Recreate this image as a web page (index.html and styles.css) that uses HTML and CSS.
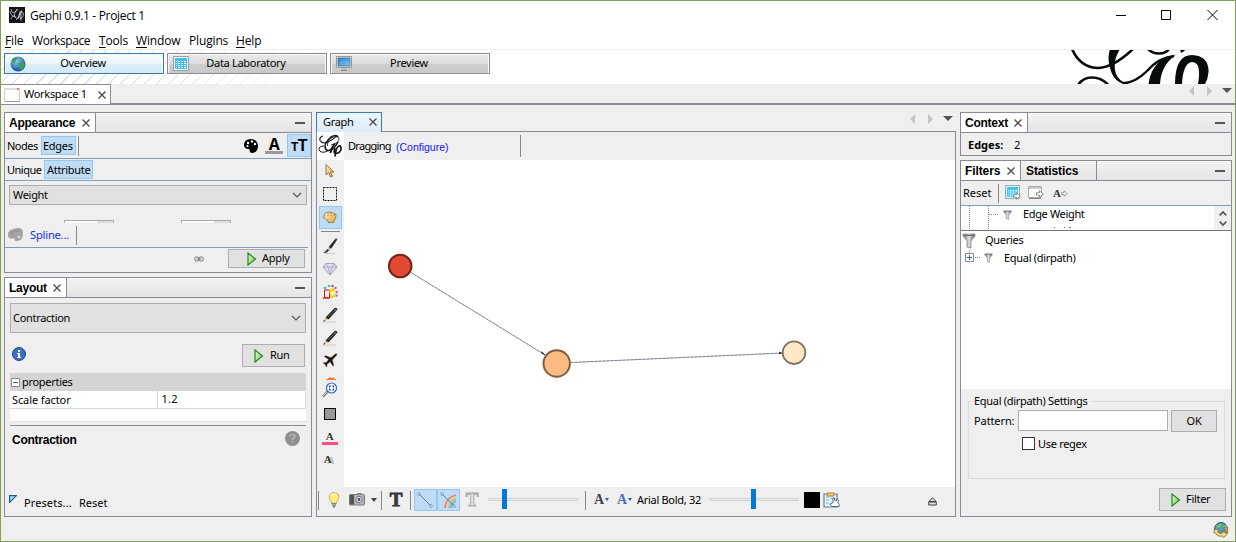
FILE: index.html
```
<!DOCTYPE html>
<html lang="en">
<head>
<meta charset="utf-8">
<title>Gephi 0.9.1 - Project 1</title>
<link rel="stylesheet" href="styles.css">
</head>
<body>
<svg class="defs" aria-hidden="true">
  <defs>
    <linearGradient id="gBtn" x1="0" y1="0" x2="1" y2="1"><stop offset="0" stop-color="#f0fbe8"/><stop offset="1" stop-color="#6cc53c"/></linearGradient>
    <linearGradient id="gGray" x1="0" y1="0" x2="1" y2="0"><stop offset="0" stop-color="#777"/><stop offset=".5" stop-color="#ddd"/><stop offset="1" stop-color="#666"/></linearGradient>
    <radialGradient id="gGlobe" cx=".4" cy=".3" r=".7"><stop offset="0" stop-color="#8fcbf2"/><stop offset="1" stop-color="#14509c"/></radialGradient>
    <linearGradient id="gGold" x1="0" y1="0" x2="1" y2="1"><stop offset="0" stop-color="#fff3c4"/><stop offset="1" stop-color="#d9a440"/></linearGradient>
    <linearGradient id="gScreen" x1="0" y1="0" x2="1" y2="1"><stop offset="0" stop-color="#2b86d4"/><stop offset="1" stop-color="#7cc8fa"/></linearGradient>
    <symbol id="close" viewBox="0 0 8 8"><path d="M.5.5l7 7M7.5.5l-7 7" stroke="#4a4a4a" stroke-width="1.300" fill="none"/></symbol>
    <symbol id="play" viewBox="0 0 10 14"><path d="M1 1v12l7.5-6z" fill="url(#gBtn)" stroke="#22891c" stroke-width="1.2"/></symbol>
    <symbol id="chev" viewBox="0 0 10 6"><path d="M1 1l4 4 4-4" fill="none" stroke="#555" stroke-width="1.2"/></symbol>
    <symbol id="funnel" viewBox="0 0 14 16"><path d="M1 1h12v2L9 8v7l-4-1V8L1 3z" fill="url(#gGray)" stroke="#888" stroke-width=".8"/><path d="M2 2.500h10" stroke="#666" stroke-width="1"/></symbol>
    <symbol id="pencil" viewBox="0 0 16 16"><path d="M2 15.500q6-1 12-.4" stroke="#ccc" fill="none"/><path d="M1.500 14.500l2-4.500 2.500 2.500z" fill="#dfc483"/><path d="M3.500 10.500l9-9.500q2.500-1 3 1.500L6.500 12.500z" fill="#292929"/><path d="M1 15l1.200-2.300 1 1z" fill="#222"/><path d="M6 10l7-7" stroke="#666" stroke-width=".8"/><path d="M12.500 2l1.500 1.500" stroke="#aaa"/></symbol>
    <symbol id="table" viewBox="0 0 16 16"><path d="M.5.5h15v14H.5z" fill="#fff" stroke="#8ba3a8"/><path d="M2 2h12v11H2z" fill="#3fc0ec"/><path d="M5 5h2v1H5zM8 5h2v1H8zM11 5h2v1h-2zM5 7h2v1H5zM8 7h2v1H8zM11 7h2v1h-2zM5 9h2v1H5zM8 9h2v1H8zM11 9h2v1h-2zM5 11h2v1H5zM8 11h2v1H8zM11 11h2v1h-2z" fill="#fff"/><path d="M3 5h1v1H3zM3 7h1v1H3zM3 9h1v1H3zM3 11h1v1H3z" fill="#c8eefb"/></symbol>
    <symbol id="arrow" viewBox="0 0 8 8"><path d="M.5 2.800h3V.8L7.300 4 3.500 7.200v-2h-3z" fill="#fff" stroke="#777" stroke-width=".8"/></symbol>
    <symbol id="navs" viewBox="0 0 46 12"><path d="M7 1v10L2 6zM20 1v10l5-5z" fill="#c4c4c4"/><path d="M35 3h10l-5 5z" fill="#555"/></symbol>
  </defs>
</svg>

<header class="titlebar">
  <svg class="appicon" width="16" height="16" viewBox="0 0 16 16"><path fill="#141418" d="M0 0h16v16H0z"/><path d="M2 2q1 5 4 3t3-3M8 2q-5 7-1 9t4-7M2 12q1-4 5-2M9 12q1-8 4-7t0 6q-2 2-2-1M12 4v10M1 4q1 6 5 5M7 13q4-2 6-10" fill="none" stroke="#ddd" stroke-width=".7"/></svg>
  <span class="title">Gephi 0.9.1 - Project 1</span>
  <svg class="winctl" width="104" height="12" viewBox="0 0 104 12"><path d="M0 6.500h10M45.500 1.500h9v9h-9zM91.500 1l10 10M101.500 1l-10 10" fill="none" stroke="#000"/></svg>
</header>

<nav class="menubar">
  <span class="m1"><u>F</u>ile</span><span class="m2">Workspace</span><span class="m3"><u>T</u>ools</span><span class="m4"><u>W</u>indow</span><span class="m5">Plugins</span><span class="m6"><u>H</u>elp</span>
</nav>

<div class="banner">
  <button class="mode active"><svg width="16" height="16" viewBox="0 0 16 16"><circle cx="8" cy="8" r="7.500" fill="url(#gGlobe)"/><path d="M2 3q4-3 6-1l-2 2-1 3-3-1zM8 7l5-1 2 3-3 5-3-1 0-3z" fill="#3ca05a"/></svg><span>Overview</span></button>
  <button class="mode"><svg width="16" height="16"><use href="#table"/></svg><span>Data Laboratory</span></button>
  <button class="mode"><svg width="16" height="16" viewBox="0 0 16 16"><path d="M.5.5h15v11H.5z" fill="#e4e4e4" stroke="#999"/><path d="M2 2h12v8H2z" fill="url(#gScreen)" stroke="#357"  stroke-width=".6"/><path d="M6 12h4v2H6z" fill="#bbb"/><path d="M5 14.500h6" stroke="#888"/></svg><span>Preview</span></button>
  <svg class="brand" width="140" height="34" viewBox="0 0 140 34"><g fill="none" stroke="#080b0b"><path d="M2-1Q10 17 27 18Q43 18 63-1" stroke-width="2.600"/><path d="M8.500 34.500Q13 27.500 22 27.500T38 34.500" stroke-width="2.600"/><path d="M78-1q4 4.500 11 4.500T99-1" stroke-width="2.600"/><path d="M52 33.500Q65 33 77 21 88 8 104 6" stroke-width="2.400"/></g><g fill="#080b0b"><path d="M40-1h10Q42 12 46 24q3 7 10 8.500V34Q44 33 40 18 37 8 40-1z"/><path d="M78.500 34Q80 20 90 11L106 5Q91 15 90 34z"/><path d="M105 34Q105 5 122 5q17 1 16.500 17-.5 7-3.500 12h-7Q132 12 122 12q-9 1-10 22zM110-1h6q-1 2-5 4z"/></g></svg>
</div>

<div class="wstabs">
  <div class="wstab"><svg width="16" height="14" viewBox="0 0 16 14"><path d="M.5.5h15v13H.5z" fill="#fff" stroke="#ccc"/><path d="M.5 13.500h15" stroke="#999"/><path d="M0 0h16v2H0z" fill="#ddd"/><path d="M13 0h2v2h-2z" fill="#e78"/></svg><span>Workspace 1</span><svg class="x" width="8" height="8"><use href="#close"/></svg></div>
  <svg class="navs" width="46" height="12"><use href="#navs"/></svg>
</div>

<main class="work">
  <div class="col left">
    <section class="panel appearance">
      <div class="phead"><div class="ptab"><span class="b ap">Appearance</span><svg width="8" height="8"><use href="#close"/></svg></div><i class="min"></i></div>
      <div class="tb tb1"><span class="nodes">Nodes</span><span class="on edges">Edges</span><i class="vsep"></i>
        <svg class="palette" width="16" height="16" viewBox="0 0 16 16"><path d="M8 1C3 1 1 4 1 7c0 4 4 4 5 4s0 4 3 4c4 0 6-3 6-7S12 1 8 1z" fill="#000"/><g fill="#fff"><circle cx="5" cy="5" r="1.200"/><circle cx="9" cy="3.500" r="1.200"/><circle cx="12" cy="6" r="1.200"/><circle cx="4.500" cy="8" r="1"/></g></svg>
        <span class="acolor">A</span><span class="on size"><small>T</small>T</span></div>
      <div class="tb tb2"><span class="unique">Unique</span><span class="on attr">Attribute</span></div>
      <div class="select weight"><span>Weight</span><svg width="10" height="6"><use href="#chev"/></svg></div>
      <div class="spins"><i></i><i></i></div>
      <div class="spline"><svg width="16" height="14" viewBox="0 0 16 14"><path d="M5 1q10-3 10 4 0 8-6 8-4 0-2-3-6 2-7-2-1-5 5-7z" fill="#a3a3a3"/><circle cx="11" cy="9" r="1.300" fill="#ddd"/><path d="M3 5q4-3 9-2" stroke="#888" fill="none"/></svg><span>Spline...</span><i class="vsep"></i></div>
      <div class="applyrow"><svg width="10" height="6" viewBox="0 0 10 6"><g fill="none" stroke="#777"><rect x=".7" y="1" width="4.300" height="4" rx="1.500"/><rect x="5" y="1" width="4.300" height="4" rx="1.500"/><path d="M2.500 3h5"/></g></svg><button class="btn apply"><svg width="10" height="14"><use href="#play"/></svg><span>Apply</span></button></div>
    </section>

    <section class="panel layout">
      <div class="phead"><div class="ptab"><span class="b ly">Layout</span><svg width="8" height="8"><use href="#close"/></svg></div><i class="min"></i></div>
      <div class="select contraction"><span>Contraction</span><svg width="10" height="6"><use href="#chev"/></svg></div>
      <div class="runrow"><svg width="14" height="14" viewBox="0 0 14 14"><circle cx="7" cy="7" r="6.500" fill="#3d6fc6" stroke="#22438c"/><path d="M6 3h2v2H6zM5 6h3v4h1v1H5v-1h1V7H5z" fill="#fff"/></svg><button class="btn run"><svg width="10" height="14"><use href="#play"/></svg><span>Run</span></button></div>
      <div class="props">
        <div class="prophead"><svg width="9" height="9" viewBox="0 0 9 9"><path d="M.5.5h8v8h-8z" fill="#fff" stroke="#888"/><path d="M2 4.500h5" stroke="#36a"/></svg><span>properties</span></div>
        <div class="proprow"><span>Scale factor</span><span>1.2</span></div>
        <div class="propblank"></div>
      </div>
      <div class="desc"><span class="b">Contraction</span><svg width="15" height="15" viewBox="0 0 15 15"><circle cx="7.500" cy="7.500" r="7.500" fill="#8f8f8f"/><path d="M5 5.500q0-2 2.500-2t2.500 2q0 1-1.300 1.800T7.500 9" fill="none" stroke="#b5b5b5" stroke-width="1.600"/><path d="M6.700 10.200h1.600v1.600H6.700z" fill="#b5b5b5"/></svg></div>
      <div class="presets"><svg width="8" height="8" viewBox="0 0 8 8"><path d="M.6.6h6.800L.6 7.400z" fill="#a9dcf8" stroke="#1b5f97" stroke-width="1.200"/></svg><span class="pr">Presets...</span><span>Reset</span></div>
    </section>
  </div>

  <section class="center">
    <div class="gtabs"><div class="gtab"><span>Graph</span><svg width="8" height="8"><use href="#close"/></svg></div><svg class="navs" width="46" height="12"><use href="#navs"/></svg></div>
    <div class="gbody">
      <div class="gtop"><div class="glogo"><svg width="25" height="24" viewBox="0 0 25 24"><g fill="none" stroke="#151515"><path d="M5 2Q1 3 2 6.500 4 10 9 8.500 15 6 19 1.500" stroke-width="1.100"/><path d="M20 3Q18 0 13 3 7 8 7 13q1 5 6 3 4-2 7-8" stroke-width="1.500"/><path d="M9.500 12Q9 5 16 3q5-1 5 2 0 4-8 6" stroke-width=".8"/><path d="M6 12Q1 12 1 15.500 2 19 7 18q6-1 10-8" stroke-width="1"/><path d="M17 9.500Q13 14 12.500 19" stroke-width="1.800"/><path d="M17 14q-2 5 .5 5.500 4 0 5.500-4 .5-4-2-3.500-3 1-4 10.500" stroke-width="1.700"/></g></svg></div><span class="drag">Dragging</span><span class="conf">(Configure)</span><i class="vsep"></i></div>
      <div class="gmid">
        <div class="tools">
          <div class="tool"><svg width="12" height="16" viewBox="0 0 12 16"><path d="M2 1.500v10.500l2.600-2.500 2 4.500 1.900-.8-2-4.200h3.500z" fill="url(#gGold)" stroke="#9a7544"/></svg></div>
          <div class="tool"><svg width="16" height="16" viewBox="0 0 16 16"><path d="M1.500 1.500h13v13h-13z" fill="none" stroke="#111" stroke-dasharray="2 1"/></svg></div>
          <div class="tool sel"><svg width="16" height="16" viewBox="0 0 16 16"><path d="M3 4.500q2-2 3-.5Q7 2 9 3.800q2-1 2.500.7Q14 4 14 6.500q0 3.500-2 5v2H6v-2Q4 11 3 9.500 0 8.500 2 7z" fill="url(#gGold)" stroke="#a07f48"/><path d="M6 4.500v2.500M9 4.500v2.500M12 4.500v2.500" stroke="#b78a45" stroke-width=".8"/></svg></div>
          <i class="hsep"></i>
          <div class="tool brush"><svg width="16" height="16" viewBox="0 0 16 16"><path d="M3 15.500h10" stroke="#ccc"/><path d="M14 .5l1 1-6 9-2-1.500z" fill="#222" stroke="#222" stroke-width=".5"/><path d="M6.500 9l2.500 2-1.500 2-2-2z" fill="#bbb"/><path d="M5.500 11l1.500 1.500Q5 15.500 1 15q2-1 4.500-4z" fill="#3d382c"/></svg></div>
          <div class="tool"><svg width="16" height="16" viewBox="0 0 16 16"><path d="M4 2.500h8l3 3.500-7 8-7-8z" fill="#e0e0f0" stroke="#a3a3b8"/><path d="M1 6h14M4 2.500L6 6l2 8 2-8 2-3.500" stroke="#9c9cb2" fill="none" stroke-width=".7"/></svg></div>
          <div class="tool"><svg width="16" height="16" viewBox="0 0 16 16"><g><circle cx="3" cy="4" r="1.300" fill="#58a6e8"/><circle cx="7" cy="2" r="1.300" fill="#65ba54"/><circle cx="10.500" cy="2" r="1.200" fill="#666"/><circle cx="13.500" cy="4" r="1.200" fill="#e34bc5"/><circle cx="15" cy="8" r="1.200" fill="#bf62e7"/><circle cx="14.500" cy="11.500" r="1.200" fill="#9a62e7"/></g><path d="M2.500 6h5v8h-5z" fill="#efebe5" stroke="#b22"/><path d="M1 14.500q3-2 6 0" stroke="#d22" stroke-width="1.500" fill="none"/><path d="M7 6l5-2.500 2.500 8.500-6 2.500z" fill="#f6c728"/><path d="M8 8.500l4-2 1 4-3.500 1.500z" fill="#fff2b0"/></svg></div>
          <div class="tool"><svg width="16" height="16"><use href="#pencil"/></svg></div>
          <div class="tool"><svg width="16" height="16"><use href="#pencil"/></svg></div>
          <div class="tool plane"><svg width="16" height="16" viewBox="0 0 16 16"><path d="M2 4.500L3.500 3.500 9 5.500 12.500 2.500Q14.500 1 15 2t-1.500 2.500L10.500 8l1.500 5.500-1 .7L8 10 5 12.500l.2 2-1 .5-1.200-2.500L1 11l.8-.8 2.200.3L6.500 7.500z" fill="#1b1712" stroke="#c8ab7d" stroke-width=".3"/></svg></div>
          <svg class="dots" width="10" height="3" viewBox="0 0 10 3"><path d="M0 2.500h10M2 1.500h6M3.500.5h1M6.500.5h1" stroke="#f57b2c"/></svg>
          <div class="tool mag"><svg width="16" height="16" viewBox="0 0 16 16"><path d="M1 14.500L6 9" stroke="#777" stroke-width="2.500"/><path d="M1 14L5.500 9.500" stroke="#ddd"/><circle cx="9.500" cy="6" r="5" fill="#fff" stroke="#3565c5" stroke-width="1.200"/><path d="M7.500 5.500V4H9M10 4h1.500v1.500M11.500 6.500V8H10M9 8H7.500V6.500" fill="none" stroke="#2554bb" stroke-width="1.200"/></svg></div>
          <div class="tool sq"><i></i></div>
          <div class="tool pinkA"><span>A</span></div>
          <div class="tool shadeA"><span>A</span></div>
        </div>
        <svg class="canvas" width="611" height="327" viewBox="344 160 611 327">
          <g stroke="#9a9aab" stroke-width="1"><path d="M411 272.500L546 355.500"/><path d="M571 362.500L783 353"/></g>
          <g stroke="#666672" stroke-width=".5" stroke-dasharray="2 2"><path d="M411 272.500L546 355.500"/><path d="M571 362.500L780 353.200"/></g>
          <path d="M541.500 351l5 5-5-2.500zM779 351.800l4 1.200-4 1.500z" fill="#333"/>
          <circle cx="400.200" cy="266" r="11.300" fill="#e34a33" stroke="#712519" stroke-width="2"/>
          <circle cx="556.700" cy="363.500" r="13.200" fill="#fdbb84" stroke="#7e5d42" stroke-width="2"/>
          <circle cx="794" cy="352.700" r="11.300" fill="#fee8c8" stroke="#7f7464" stroke-width="1.800"/>
        </svg>
      </div>
      <div class="gbot">
        <i class="vsep s1"></i>
        <svg class="bulb" width="12" height="16" viewBox="0 0 12 16"><path d="M3.500 10Q0 6 1.500 3 3 .5 6 .5T10.500 3Q12 6 8.500 10v2h-5z" fill="#fff27b" stroke="#ba9e4f" stroke-width=".8"/><path d="M4 3q2-2 3-.5" stroke="#fff" fill="none" stroke-width="1.500"/><path d="M4 11.500h4M4 13.500h4" stroke="#888" stroke-width="1.400"/><path d="M5 15h2" stroke="#444"/></svg>
        <svg class="cam" width="16" height="13" viewBox="0 0 16 13"><rect x=".5" y="1.500" width="15" height="10.500" rx="1" fill="#b5b5b5" stroke="#777"/><path d="M1 2h4v9.500H1z" fill="#555"/><path d="M8 0h5v2H8z" fill="#888"/><circle cx="10" cy="6.500" r="3.200" fill="#ddd" stroke="#777"/><circle cx="10" cy="6.500" r="1.400" fill="#447"/></svg>
        <svg class="dd" width="6" height="4" viewBox="0 0 6 4"><path d="M0 0h6L3 4z" fill="#444"/></svg>
        <i class="vsep s2"></i><span class="bigT">T</span><i class="vsep s3"></i>
        <div class="edge e1"><svg width="20" height="20" viewBox="0 0 20 20"><path d="M3 3l12 12" stroke="#5c80b0"/><circle cx="3" cy="3" r="1.300" fill="#fff" stroke="#5c80b0" stroke-width=".8"/><circle cx="15" cy="15" r="1.300" fill="#fff" stroke="#5c80b0" stroke-width=".8"/></svg></div><div class="edge"><svg width="20" height="20" viewBox="0 0 20 20"><g fill="none" stroke-width="1.800" opacity=".8"><path d="M6 17Q6 7 17 4" stroke="#f46868"/><path d="M8 17q0-8 9-11" stroke="#f7cf62"/><path d="M10 17q0-6 7-9" stroke="#77cf8a"/><path d="M12 17q0-4 5-7" stroke="#839bea"/></g><path d="M3 3l12 12" stroke="#5c80b0"/><circle cx="3" cy="3" r="1.300" fill="#fff" stroke="#5c80b0" stroke-width=".8"/><circle cx="15" cy="15" r="1.300" fill="#fff" stroke="#5c80b0" stroke-width=".8"/></svg></div>
        <span class="bigT ghost">T</span>
        <div class="slider sl1"><i></i></div><i class="vsep s4"></i>
        <span class="fa">A<svg width="4" height="3" viewBox="0 0 4 3"><path d="M0 0h4L2 3z" fill="#2e5b96"/></svg></span><span class="fa blue">A<svg width="4" height="3" viewBox="0 0 4 3"><path d="M0 0h4L2 3z" fill="#2e5b96"/></svg></span><span class="font">Arial Bold, 32</span>
        <div class="slider sl2"><i></i></div>
        <i class="black"></i>
        <svg class="clip" width="17" height="16" viewBox="0 0 17 16"><path d="M1 2h13v13H1z" fill="#e8f1f4" stroke="#62808e" stroke-width="1.200"/><path d="M3 5h3M3 8h3M3 11h3M7 6h4" stroke="#72b4d2"/><path d="M4 1h7v3H4z" fill="#f5cf78" stroke="#ae8136"/><path d="M7 12l3-1.500V8q-1-2 1.500-2v2l1.500 1 1-2.500q2 1 1 4 2 2 1 4H9z" fill="#fff" stroke="#526a76"/></svg>
        <svg class="eject" width="9" height="9" viewBox="0 0 9 9"><path d="M4.500.7L8 4.500H1zM.7 5h7.600v3H.7z" fill="#ddd" stroke="#444"/></svg>
      </div>
    </div>
  </section>

  <div class="col right">
    <section class="panel context">
      <div class="phead"><div class="ptab"><span class="b cx">Context</span><svg width="8" height="8"><use href="#close"/></svg></div><i class="min"></i></div>
      <div class="edgecount"><b>Edges:</b><span>2</span></div>
    </section>
    <section class="panel filters">
      <div class="phead"><div class="ptab"><span class="b fl">Filters</span><svg width="8" height="8"><use href="#close"/></svg></div><div class="ptab off"><span class="b st">Statistics</span></div><i class="min"></i></div>
      <div class="ftb"><span>Reset</span><i class="vsep"></i>
        <svg width="16" height="16" viewBox="0 0 16 16"><use href="#table" width="15" height="15"/><use href="#arrow" x="8" y="7" width="8" height="8"/></svg>
        <svg width="16" height="16" viewBox="0 0 16 16"><path d="M.5 1.500h13v11H.5z" fill="#fff" stroke="#aaa"/><path d="M1 2h12v2H1z" fill="#ccc"/><path d="M1 13.500h12" stroke="#888"/><use href="#arrow" x="8" y="5" width="8" height="8"/></svg>
        <span class="farrow">A<svg width="7" height="7"><use href="#arrow"/></svg></span></div>
      <div class="tree"><svg class="guides" width="40" height="23" viewBox="0 0 40 23"><path d="M8.500 0v23M27.500 0v23M28 8.500h9" fill="none" stroke="#888" stroke-dasharray="1 1"/></svg><svg width="9" height="10" viewBox="0 0 14 16"><use href="#funnel"/></svg><span>Edge Weight</span><svg class="bits" width="18" height="1" viewBox="0 0 18 1"><path d="M0 .5h1M10 .5h1M15 .5h2" stroke="#777"/></svg>
        <div class="scroll"><svg width="8" height="5" viewBox="0 0 8 5"><path d="M.7 4.300L4 1l3.300 3.300" fill="none" stroke="#555" stroke-width="1.700"/></svg><svg width="8" height="5" viewBox="0 0 8 5"><path d="M.7.7L4 4 7.300.7" fill="none" stroke="#555" stroke-width="1.700"/></svg></div></div>
      <div class="queries">
        <div class="q1"><svg width="14" height="16"><use href="#funnel"/></svg><span>Queries</span></div>
        <div class="q2"><svg width="15" height="14" viewBox="0 0 15 14"><path d="M4.500 0v3M10 7.500h5" stroke="#888" stroke-dasharray="1 1"/><path d="M.5 3.500h8v8h-8z" fill="#fff" stroke="#8a8a8a"/><path d="M2 7.500h5M4.500 5v5" stroke="#36a"/></svg><svg class="f" width="9" height="10" viewBox="0 0 14 16"><use href="#funnel"/></svg><span>Equal (dirpath)</span></div>
      </div>
      <div class="settings">
        <fieldset><legend>Equal (dirpath) Settings</legend>
          <div class="pat"><label>Pattern:</label><i class="input"></i><button class="btn ok">OK</button></div>
          <div class="regex"><i></i><span>Use regex</span></div>
        </fieldset>
        <button class="btn filter"><svg width="10" height="14"><use href="#play"/></svg><span>Filter</span></button>
      </div>
    </section>
  </div>
</main>
<footer class="status"><svg width="16" height="16" viewBox="0 0 16 16"><circle cx="8" cy="7" r="6.500" fill="#4f9bb8" stroke="#245a6c"/><path d="M3 4q3-3 6-2l-1 3-4 1zM9 4l5-1v5z" fill="#7dbc71"/><path d="M1 8q2-2 5 .5L4.500 10q2 2 5 1V9l5 3-4 3.500-1-1.500q-5 1-7-3H1z" fill="#f4dc8f" stroke="#8c661f" stroke-width=".8"/><path d="M11 5l3.500 1 .5 5-2-1q0-3-2-4z" fill="#dca954" stroke="#8c661f" stroke-width=".6"/></svg></footer>
</body>
</html>
```
FILE: styles.css
```
*{box-sizing:border-box}
body{margin:0;width:1236px;height:542px;overflow:hidden;background:#efefef;border:1px solid #82a054;font:11px/14px "Noto Sans","Open Sans",sans-serif;letter-spacing:-.3px;color:#000;display:flex;flex-direction:column;white-space:nowrap}
svg{display:block;flex:none}
i{display:block;flex:none}
button{font:inherit;letter-spacing:inherit;color:inherit;margin:0;padding:0;border-radius:0}
.defs{width:0;height:0;position:absolute}
.b{font-family:"Liberation Sans",Arial,sans-serif;font-weight:700;font-size:12px;letter-spacing:-.25px}

.titlebar{height:30px;flex:none;background:#fff;display:flex;align-items:center;padding:0 15px 2px 8px;font:12px/16px "Open Sans",sans-serif}
.title{margin:2px 0 0 5px;letter-spacing:-.33px}
.winctl{margin-left:auto}
.menubar{height:19px;flex:none;background:#fff;border-bottom:1px solid #efefef;display:flex;font:12px/18px "Open Sans",sans-serif;padding:1px 0 0 4px;letter-spacing:-.15px}
.menubar u{text-underline-offset:2px}
.m1{width:27px}.m2{width:67px;letter-spacing:-.4px}.m3{width:37px}.m4{width:53px}.m5{width:47px}
.banner{height:34px;flex:none;padding:3px 25px 0 3px;display:flex;gap:3px;background:linear-gradient(90deg,rgba(255,255,255,0),#fff 330px),repeating-linear-gradient(135deg,#fff 0 6px,#d8d8d8 6px 7px,#fff 7px 8.500px);align-items:flex-start}
.mode{width:160px;height:21px;border:1px solid #8a8b97;box-shadow:inset 1px 1px #f8f8f8,inset -1px 0 #f8f8f8;background:linear-gradient(#eaeaea,#dcdcdc 50%,#cecece 50%,#c9c9c9);display:flex;align-items:center;padding-left:5px}
.mode span{flex:1;text-align:center;padding:0 23px 1px 0}
.mode.active{border-color:#397bab;background:linear-gradient(#f4fbfe,#ecf7fd 50%,#dceffa 50%,#d3eaf8)}
.brand{margin:-3px 0 0 auto}
.wstabs{height:21px;flex:none;display:flex;border-bottom:2px solid #8a8b97;justify-content:space-between;padding-right:2px}
.wstab{width:110px;height:20px;background:#fff;border:1px solid #8a8b97;border-bottom:0;border-left:0;display:flex;align-items:center;padding:0 4px 0 3px;position:relative}
.wstab span{margin:-1px 0 0 4px}
.wstab .x{margin-left:auto}
.wstabs .navs{margin-top:1px}

.work{height:412px;flex:none;display:grid;grid-template-columns:308px 640px 272px;gap:4px;padding:7px 0 0 3px}
.col{display:flex;flex-direction:column;gap:4px;height:405px}
.panel{border:1px solid #8a8b97;flex:none;display:flex;flex-direction:column}
.phead{height:20px;flex:none;border-bottom:1px solid #8a8b97;background:linear-gradient(#f3f3f3,#e4e4e4);box-shadow:inset 0 1px #fff;display:flex;align-items:center}
.ptab{height:19px;background:#fff;border-right:1px solid #8a8b97;display:flex;align-items:center;justify-content:space-between;padding:1px 5px 0 4px}
.ptab svg{margin-top:-1px}
.min{width:10px;height:2px;background:#555;margin:0 6px 0 auto}
.vsep{width:1px;background:#888}
.on{background:#bfdcf4;border:1px solid #91c8f0}
.select{border:1px solid #adadad;background:#e1e1e1;display:flex;align-items:center;justify-content:space-between}
.btn{border:1px solid #adadad;background:#e1e1e1;display:flex;align-items:center}

.appearance{height:161px}
.appearance .ptab{width:91px}
.tb{display:flex;border-bottom:1px solid #7d9dbb}
.tb1{height:26px;padding-left:2px}
.nodes{width:34px;padding-top:6px;letter-spacing:-.5px}
.edges{width:35px;height:19px;margin-top:3px;padding:2px 0 0 1px}
.tb1 .vsep{height:20px;margin:3px 0 0 2px}
.palette{margin:5px 0 0 164px}
.acolor{margin:4px 0 0 6px;width:18px;height:17px;border-bottom:3px solid #999;text-align:center;font:700 16px/15px "Open Sans",sans-serif}
.size{margin:1px 0 0 4px;width:24px;height:23px;text-align:center;font:700 16px/21px "Liberation Sans",sans-serif;letter-spacing:-.5px}
.size small{font-size:12px}
.tb2{height:22px;padding-left:2px}
.unique{width:37px;padding-top:4px;letter-spacing:-.5px}
.attr{width:49px;height:19px;margin-top:1px;padding:2px 0 0 2px}
.weight{width:298px;height:20px;margin:4px 0 0 4px;padding:0 4px 0 3px}
.spins{display:flex;gap:67px;margin:15px 0 0 59px;height:3px}
.spins i{width:50px;height:3px;border:1px solid #aaa;border-bottom:0;background:linear-gradient(90deg,#fff 32px,#ddd 32px)}
.spline{height:25px;margin-right:3px;border-bottom:1px solid #7d9dbb;display:flex;align-items:center;padding:0 0 1px 3px;color:#0b31ff;letter-spacing:-.15px}
.spline span{width:46px;margin-left:6px}
.spline .vsep{height:19px;margin-top:2px}
.applyrow{display:flex;justify-content:flex-end;align-items:center;padding:1px 6px 0 0;gap:24px}
.apply{width:77px;height:19px;padding-left:18px;gap:5px}
.btn span{padding-bottom:1px}

.layout{flex:1}
.layout .ptab{width:62px}
.contraction{width:296px;height:30px;margin:5px 0 0 5px;padding:0 4px 0 2px}
.runrow{display:flex;justify-content:space-between;margin:11px 6px 0 7px}
.runrow>svg{margin-top:3px}
.run{width:63px;height:23px;padding-left:11px;gap:6px}
.props{margin:6px 5px 0;border-bottom:1px solid #8a8b97;height:53px;flex:none}
.prophead{height:18px;background:#d4d4d4;display:flex;align-items:center;padding-left:1px;gap:2px}
.proprow{height:18px;background:#fff;border-bottom:1px solid #d8d8d8;border-right:1px solid #d8d8d8;display:flex;letter-spacing:-.1px}
.proprow span{width:148px;padding:2px 0 0 2px;border-right:1px solid #d8d8d8}
.proprow span+span{border:0;padding:1px 0 0 4px;letter-spacing:.2px}
.propblank{height:13px;background:#fff;border-bottom:1px solid #e0e0e0}
.desc{display:flex;justify-content:space-between;padding:5px 11px 0 7px;height:27px}
.desc .b{padding-top:2px}
.presets{display:flex;margin:42px 0 0 4px;letter-spacing:0}
.presets .pr{width:55px;margin-left:7px;letter-spacing:.1px}
.presets span{padding-top:1px}

.center{display:flex;flex-direction:column;height:405px}
.gtabs{height:20px;flex:none;display:flex;justify-content:space-between;box-shadow:inset 0 -1px #8a8b97;padding-right:2px}
.gtab{width:66px;height:20px;border:1px solid #397bab;border-bottom:0;background:linear-gradient(#edf6fd,#dcecf9);display:flex;align-items:center;justify-content:space-between;padding:0 4px 2px 6px}
.gtabs .navs{margin-top:1px}
.gbody{flex:1;border:1px solid #8a8b97;border-top:0;display:flex;flex-direction:column}
.gtop{height:28px;flex:none;display:flex;background:#efefef}
.glogo{width:27px;height:28px;background:#fff;padding:2px 0 0 1px}
.drag{margin-left:4px;width:48px;padding-top:7px;letter-spacing:-.7px}
.conf{color:#1414ff;padding-top:8px;width:124px;font:10.5px/14px "Liberation Sans",sans-serif;letter-spacing:0}
.gtop .vsep{height:22px;margin-top:3px}
.gmid{display:flex;height:327px;flex:none}
.tools{width:27px;display:flex;flex-direction:column;align-items:center}
.tool{width:23px;height:23px;flex:none;display:flex;align-items:center;justify-content:center;padding:0 2px 2px 0}
.tool.sel{background:#bfdcf4;border:1px solid #91c8f0}
.hsep{width:19px;height:1px;background:#888;margin:2px 0 3px}
.plane{height:22px}
.dots{margin:5px 0 0}
.mag{height:22px}
.sq i{width:12px;height:12px;border:1px solid #000;background:#999}
.sq{height:25px}
.pinkA span{width:16px;height:15px;border-bottom:3px solid #ff4c88;text-align:center;font:700 11px/12px "Liberation Serif",serif;color:#333}
.pinkA,.shadeA{height:22px}
.shadeA span{font:700 11px/12px "Liberation Serif",serif;color:#333;text-shadow:3px 1px #bbb;margin-right:4px}
.canvas{background:#fff}
.gbot{height:29px;flex:none;display:flex;align-items:flex-start}
.gbot .vsep{height:19px;margin-top:4px}
.gbot .s1{margin-left:1px}
.bulb{margin:5px 0 0 9px}
.cam{margin:6px 0 0 9px}
.dd{margin:11px 0 0 6px}
.s2{margin-left:4px}
.bigT{width:16px;margin:2px 0 0 6px;font:700 19px/22px "Liberation Serif",serif;text-align:center;color:#3a3a3a;-webkit-text-stroke:.8px #333}
.s3{margin-left:6px}
.edge{width:23px;height:22px;margin-top:2px;background:#bfdcf4;border:1px solid #91c8f0;padding:1px}
.e1{margin-left:3px}
.bigT.ghost{margin-left:4px;color:#eee;-webkit-text-stroke:1px #aaa}
.slider{width:90px;height:3px;border:1px solid #d4d4d4;background:#e7eaea;margin-top:11px}
.slider i{width:5px;height:20px;background:#0078d7;margin:-10px 0 0 13px}
.sl1{margin-left:8px}
.s4{margin-left:7px}
.fa{width:23px;margin:5px 0 0 8px;font:700 14px/16px "Liberation Serif",serif;color:#444;display:flex}
.fa.blue{width:15px;margin-left:0;color:#4f72bc}
.fa svg{margin:6px 0 0 1px}
.font{width:72px;margin:6px 0 0 5px;letter-spacing:-.3px}
.sl2 i{margin-left:41px}
.black{width:16px;height:16px;background:#000;margin:5px 0 0 5px}
.clip{margin:5px 0 0 3px}
.eject{margin:10px 18px 0 auto}

.context{height:44px}
.context .ptab{width:67px}
.edgecount{padding:5px 0 0 7px;display:flex}
.edgecount b{width:46px;letter-spacing:0}
.filters{flex:1}
.filters .ptab{width:60px}
.filters .ptab.off{width:76px;background:none;border-right:1px solid #8a8b97}
.fl,.st{letter-spacing:-.1px}
.st{margin-left:1px}
.ftb{height:25px;flex:none;border-bottom:1px solid #7d9dbb;display:flex;align-items:center}
.ftb>span:first-child{width:35px;padding-left:2px;letter-spacing:0}
.ftb .vsep{height:19px;margin:0 6px 0 2px}
.ftb svg+svg{margin-left:7px}
.farrow{font:700 11px/14px "Liberation Serif",serif;margin-left:9px;display:flex;align-items:center;color:#333}
.tree{height:25px;flex:none;background:#fff;border-bottom:1px solid #777;display:flex;position:relative}
.tree .guides{margin-right:2px}
.tree>svg:nth-child(2){margin-top:4px}
.tree span{margin:1px 0 0 11px;letter-spacing:-.35px}
.bits{position:absolute;left:93px;top:21px}
.scroll{margin-left:auto;width:17px;background:#f0f0f0;display:flex;flex-direction:column;align-items:center;gap:5px;padding-top:5px}
.queries{height:158px;flex:none;background:#fff}
.q1,.q2{display:flex}
.q1{padding:2px 0 0 1px}
.q1 span{margin-left:9px}
.q2{padding-left:4px}
.q2 .f{margin:4px 0 0 4px}
.q2 span{margin:2px 0 0 11px}
.q2>svg:first-child{margin-top:1px}
.settings{padding:5px 5px 0 7px;display:flex;flex-direction:column;align-items:flex-end}
fieldset{width:257px;height:85px;margin:0 1px 0 0;padding:0;border:1px solid #dcdcdc;min-width:0}
legend{margin-left:3px;padding:0 2px}
.pat{display:flex;margin-top:2px}
.pat label{padding:4px 0 0 5px;width:49px;letter-spacing:-.1px}
.input{width:150px;height:21px;border:1px solid #abadb3;background:#fff}
.ok{width:46px;height:22px;margin-left:3px;justify-content:center}
.regex{display:flex;margin:5px 0 0 53px}
.regex i{width:13px;height:13px;border:1px solid #333;background:#fff}
.regex span{margin-left:3px}
.filter{width:67px;height:23px;margin:9px 0 0;padding-left:11px;gap:5px}
.status{flex:1;display:flex;justify-content:flex-end;padding:5px 6px 0 0}
```
